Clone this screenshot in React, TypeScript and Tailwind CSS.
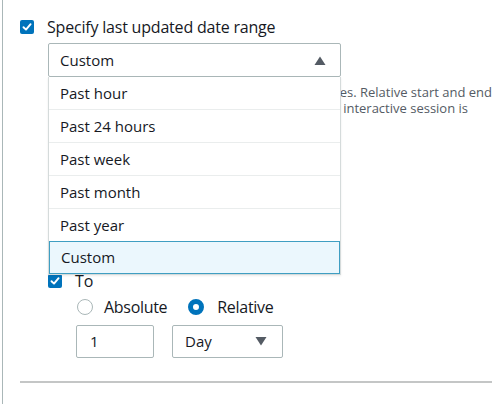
import React from 'react';

const options = ['Past hour', 'Past 24 hours', 'Past week', 'Past month', 'Past year', 'Custom'];

const Checkbox = () => (
  <span className="flex h-[14px] w-[14px] shrink-0 items-center justify-center rounded-[2px] bg-[#0073bb]">
    <svg width="10" height="10" viewBox="0 0 10 10" fill="none">
      <path d="M1.5 5.2 L4 7.6 L8.6 2.2" stroke="white" strokeWidth="1.9" strokeLinecap="round" strokeLinejoin="round" />
    </svg>
  </span>
);

const Radio = ({ checked, className = '' }: { checked?: boolean; className?: string }) =>
  checked ? (
    <span className={`block h-[16px] w-[16px] shrink-0 rounded-full border-[5px] border-[#0073bb] bg-white ${className}`} />
  ) : (
    <span className={`block h-[16px] w-[16px] shrink-0 rounded-full border border-[#aab7b8] bg-white ${className}`} />
  );

const Caret = ({ up }: { up?: boolean }) => (
  <svg width="12" height="9" viewBox="0 0 12 9">
    <path d={up ? 'M0.5 9 L6 0.5 L11.5 9 Z' : 'M0.5 0 L11.5 0 L6 8.5 Z'} fill="#545b64" />
  </svg>
);

export default function App() {
  return (
    <div className="h-[404px] w-[500px] overflow-hidden bg-white text-[#16191f]" style={{ fontFamily: '"Open Sans", "Noto Sans", sans-serif' }}>
      <div className="ml-[2px] h-full border-l border-[#aab7b8] pl-[17px] pr-[8px] pt-[17px]">
        <div className="flex h-[20px] items-center gap-[13px]">
          <Checkbox />
          <span className="text-[16px] leading-[20px] tracking-[-0.2px]">Specify last updated date range</span>
        </div>

        <div className="ml-[28px]">
          <div className="relative mt-[6px] w-[293px]">
            <div className="flex h-[34px] items-center justify-between rounded-[2px] border border-[#aab7b8] pl-[11px] pr-[14px] text-[15px]">
              <span>Custom</span>
              <Caret up />
            </div>
            {/* open options list lies over the hint text */}
            <ul className="absolute left-0 top-full z-10 w-[293px] border border-t-0 border-[#d5dbdb] bg-white shadow-[0_1px_2px_rgba(0,0,0,0.08)]">
              {options.map((o, i) =>
                o === 'Custom' ? (
                  <li key={o} className="flex h-[33px] items-center border-[1.5px] border-[#3f9ec2] bg-[#ebf7fd] pl-[11px] text-[15px]">
                    {o}
                  </li>
                ) : (
                  <li key={o} className={`flex items-center pl-[11px] text-[15px] ${i > 0 ? 'h-[33px] border-t border-[#eaeded]' : 'h-[32px]'}`}>
                    {o}
                  </li>
                )
              )}
            </ul>
          </div>

          <div className="mt-[7px] whitespace-nowrap text-[13px] leading-[16px] text-[#545b64]">
            <p className="text-right">Choose absolute dates or relative time ranges. Relative start and end</p>
            <p className="pr-[24px] text-right">dates are calculated from the time at which the interactive session is</p>
          </div>

          <div className="mt-[155px] flex flex-col">
            <div className="flex h-[20px] items-center gap-[13px]">
              <Checkbox />
              <span className="text-[16px] leading-[20px]">To</span>
            </div>
            <div className="ml-[29px] mt-[6px] flex h-[20px] items-center text-[16px] tracking-[-0.3px]">
              <Radio />
              <span className="ml-[11px]">Absolute</span>
              <Radio checked className="ml-[21px]" />
              <span className="ml-[13px]">Relative</span>
            </div>
            <div className="ml-[28px] mt-[8px] flex gap-[18px]">
              <div className="flex h-[33px] w-[78px] items-center rounded-[2px] border border-[#aab7b8] pl-[13px] text-[15px]">1</div>
              <div className="flex h-[33px] w-[111px] items-center justify-between rounded-[2px] border border-[#aab7b8] pl-[12px] pr-[15px] text-[15px]">
                <span>Day</span>
                <Caret />
              </div>
            </div>
          </div>
        </div>

        <div className="mt-[23px] h-[2px] bg-[#c4c6c6]" />
      </div>
    </div>
  );
}
